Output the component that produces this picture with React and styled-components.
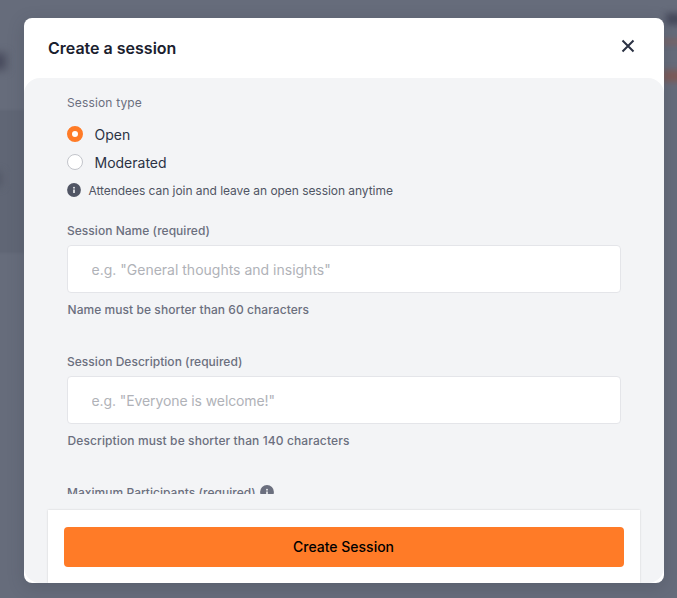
import { useState } from "react";
import styled, { createGlobalStyle } from "styled-components";

const COLORS = {
  backdrop: "#666c7b",
  white: "#ffffff",
  panel: "#f3f4f6",
  title: "#1a202e",
  text: "#2b3244",
  info: "#505564",
  label: "#6b6f7e",
  placeholder: "#b0b2b8",
  border: "#e4e5e9",
  orange: "#ff7b27",
};

const App = () => {
  const [sessionType, setSessionType] = useState("open");

  return (
    <>
      <GlobalStyle />
      <Backdrop>
        <Ghost $x={-22} $y={110} $w={46} $h={143} $color="#606675" $blur={1} />
        <Ghost $x={-12} $y={53} $w={18} $h={17} $color="#474a5c" $blur={4} />
        <Ghost $x={-8} $y={172} $w={9} $h={14} $color="#505564" $blur={4} />
        <Ghost $x={666} $y={13} $w={24} $h={12} $color="#474a5c" $blur={3} />
        <Ghost $x={662} $y={38} $w={30} $h={8} $color="#74666c" $blur={2} />
        <Ghost $x={662} $y={70} $w={30} $h={12} $color="#7d5b58" $blur={3} />
        <Modal>
          <Header>
            <Title>Create a session</Title>
            <CloseButton aria-label="Close">
              <svg width="14" height="14" viewBox="0 0 14 14">
                <path
                  d="M1.5 1.5L12.5 12.5M12.5 1.5L1.5 12.5"
                  stroke="currentColor"
                  strokeWidth="2"
                />
              </svg>
            </CloseButton>
          </Header>

          <Body>
            <ScrollArea>
              <GroupLabel>Session type</GroupLabel>
              <Options>
                <Option>
                  <Radio
                    name="type"
                    checked={sessionType === "open"}
                    onChange={() => setSessionType("open")}
                  />
                  Open
                </Option>
                <Option>
                  <Radio
                    name="type"
                    checked={sessionType === "moderated"}
                    onChange={() => setSessionType("moderated")}
                  />
                  Moderated
                </Option>
              </Options>
              <Info>
                <InfoIcon />
                Attendees can join and leave an open session anytime
              </Info>

              <Field>
                <Label>Session Name (required)</Label>
                <Input placeholder={'e.g. "General thoughts and insights"'} />
                <Helper>Name must be shorter than 60 characters</Helper>
              </Field>
              <Field>
                <Label>Session Description (required)</Label>
                <Input
                  placeholder={'e.g. "Everyone is welcome!"'}
                  $spacing="-0.1px"
                />
                <Helper $spacing="0.11px">
                  Description must be shorter than 140 characters
                </Helper>
              </Field>
              <Field>
                <Label>
                  Maximum Participants (required)
                  <InfoIcon />
                </Label>
              </Field>
            </ScrollArea>

            <Footer>
              <SubmitButton>Create Session</SubmitButton>
            </Footer>
          </Body>
        </Modal>
      </Backdrop>
    </>
  );
};

const InfoIcon = () => (
  <svg width="14" height="14" viewBox="0 0 14 14">
    <circle cx="7" cy="7" r="6.9" fill="currentColor" />
    <rect x="6.2" y="3.9" width="1.6" height="1.6" fill={COLORS.panel} />
    <rect x="6.2" y="6.5" width="1.6" height="3.5" fill={COLORS.panel} />
  </svg>
);

const GlobalStyle = createGlobalStyle`
  * {
    box-sizing: border-box;
  }
  body {
    margin: 0;
    font-family: Inter, sans-serif;
  }
`;

const Backdrop = styled.div`
  position: relative;
  height: 598px;
  padding: 18px 13px 15px 24px;
  overflow: hidden;
  background-color: ${COLORS.backdrop};
`;

/* blurred pieces of the page behind the modal */
const Ghost = styled.div`
  position: absolute;
  left: ${(props) => props.$x}px;
  top: ${(props) => props.$y}px;
  width: ${(props) => props.$w}px;
  height: ${(props) => props.$h}px;
  background-color: ${(props) => props.$color};
  filter: blur(${(props) => props.$blur}px);
`;

const Modal = styled.div`
  position: relative;
  display: flex;
  flex-direction: column;
  height: 565px;
  overflow: hidden;
  border-radius: 8px;
  background-color: ${COLORS.white};
  box-shadow: 0 4px 16px rgba(50, 60, 70, 0.25);
`;

const Header = styled.div`
  display: flex;
  justify-content: space-between;
  align-items: center;
  height: 60px;
  padding: 0 29px 0 24px;
`;

const Title = styled.h1`
  margin: 0;
  font-size: 16px;
  font-weight: 600;
  line-height: 24px;
  color: ${COLORS.title};
`;

const CloseButton = styled.button`
  display: flex;
  margin-bottom: 4px;
  padding: 0;
  border: none;
  background: none;
  color: ${COLORS.text};
`;

const Body = styled.div`
  display: flex;
  flex-direction: column;
  justify-content: space-between;
  height: 505px;
  padding: 0 24px;
  overflow: hidden;
  border-radius: 16px;
  background-color: ${COLORS.panel};
`;

const ScrollArea = styled.div`
  height: 416px;
  padding: 16px 19px 0;
  overflow: hidden;
`;

const Label = styled.div`
  display: flex;
  align-items: center;
  gap: 4px;
  height: 16px;
  font-size: 12px;
  font-weight: 500;
  letter-spacing: 0.03px;
  color: ${COLORS.label};
`;

const GroupLabel = styled(Label)`
  font-weight: 400;
  letter-spacing: 0.15px;
`;

const Options = styled.div`
  display: flex;
  flex-direction: column;
  gap: 8px;
  margin: 14px 0 10px;
`;

const Option = styled.label`
  display: flex;
  align-items: center;
  gap: 11.5px;
  height: 20px;
  font-size: 14px;
  color: ${COLORS.text};
`;

const Radio = styled.input.attrs({ type: "radio" })`
  appearance: none;
  width: 16px;
  height: 16px;
  margin: 0;
  border: 1px solid #c3c5cb;
  border-radius: 50%;
  background-color: ${COLORS.white};

  &:checked {
    border: 5px solid ${COLORS.orange};
  }
`;

const Info = styled.div`
  display: flex;
  align-items: center;
  gap: 7.5px;
  height: 16px;
  margin-bottom: 24px;
  font-size: 12px;
  letter-spacing: -0.05px;
  color: ${COLORS.info};
`;

const Field = styled.div`
  height: 131px;
`;

const Input = styled.input`
  display: block;
  width: 554px;
  height: 48px;
  margin: 7px 0 8px;
  padding: 0 23.5px;
  border: 1px solid ${COLORS.border};
  border-radius: 4px;
  background-color: ${COLORS.white};
  font-family: inherit;
  font-size: 14px;
  letter-spacing: ${(props) => props.$spacing || "normal"};

  &::placeholder {
    color: ${COLORS.placeholder};
  }
`;

const Helper = styled(Label)`
  padding-left: 0.5px;
  letter-spacing: ${(props) => props.$spacing || "0.06px"};
`;

const Footer = styled.div`
  height: 73px;
  padding: 17px 16px 16px;
  background-color: ${COLORS.white};
  box-shadow: 0 0 2px rgba(0, 0, 0, 0.15);
`;

const SubmitButton = styled.button`
  width: 100%;
  height: 40px;
  padding: 0 1px 2px 0;
  border: none;
  border-radius: 4px;
  background-color: ${COLORS.orange};
  color: #000;
  font-family: inherit;
  font-size: 14px;
  font-weight: 500;
`;

export default App;
